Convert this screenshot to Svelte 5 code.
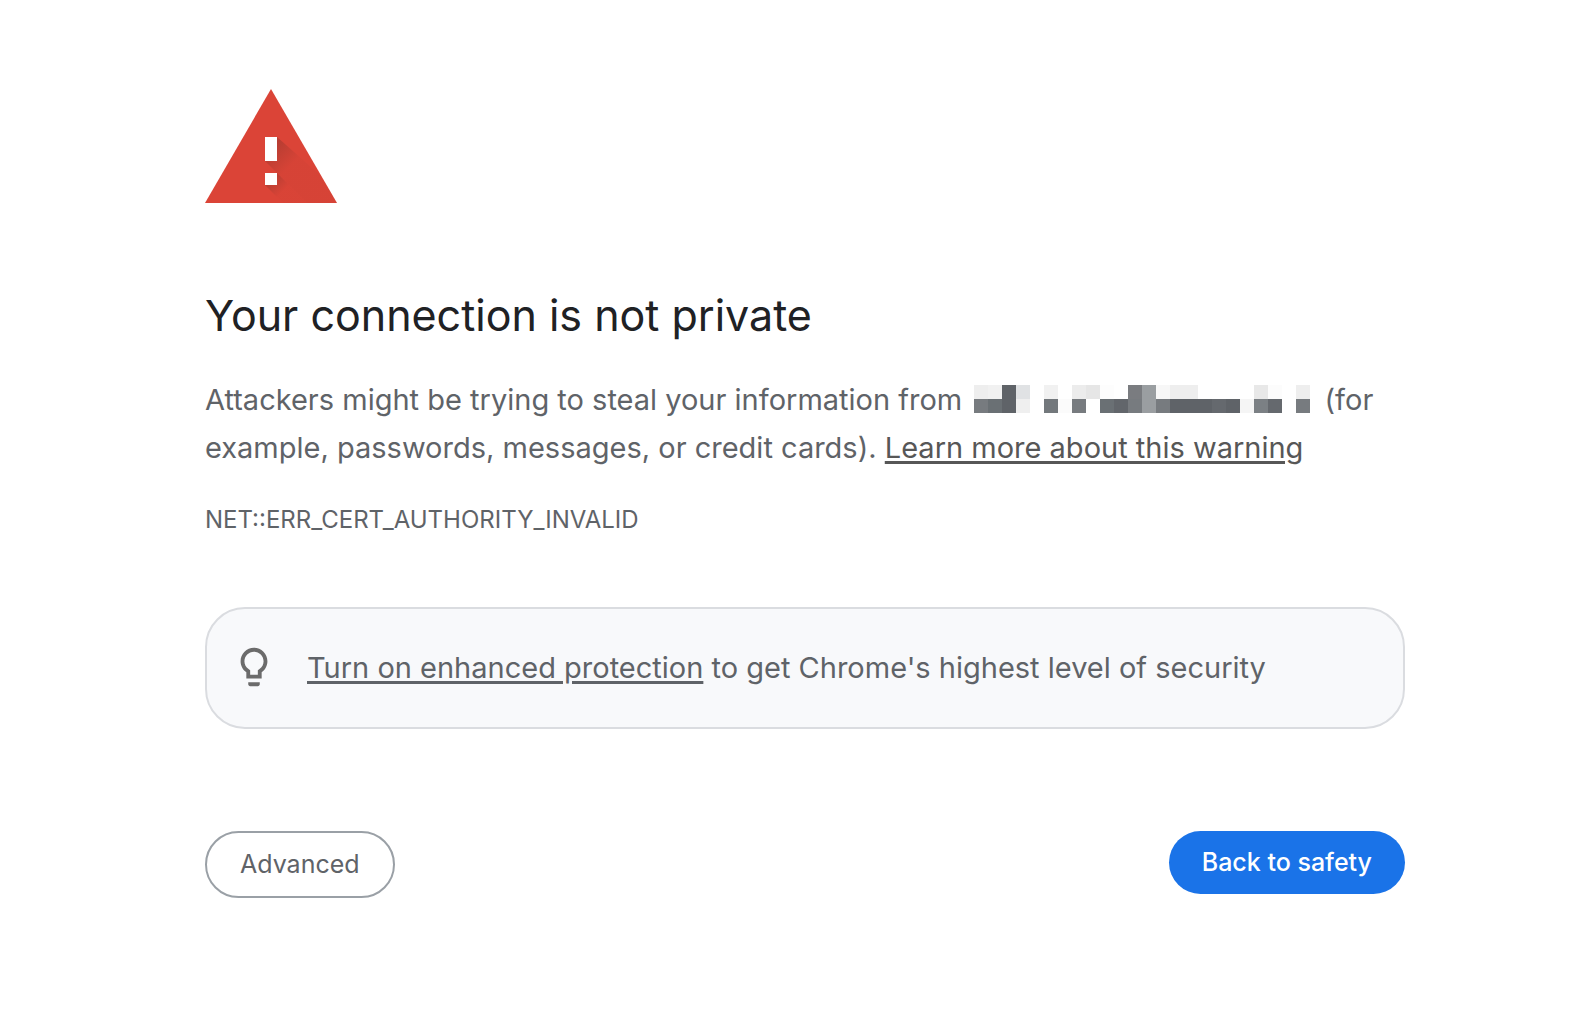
<script lang="ts">
	let { onAdvanced = () => {}, onBack = () => {} } = $props();

	// Masked host name, one colour per block, null where the block is empty
	const cell = 14;
	const mask: (string | null)[][] = [
		['#eeeeee', '#f1f1f1', '#5f6368', '#e0e2e4', null, '#f1f1f1', null, '#ececec', '#e6e6e6', '#fdfdfd', null, '#7a7c80', '#9a9ea1', '#f7f7f7', '#eeeeee', '#eeeeee', null, null, null, null, '#e8e8e8', '#fcfcfc', null, '#eeeeee'],
		['#777b7f', '#6a7074', '#5f6368', '#efefef', null, '#73787c', '#fbfbfb', '#777b7f', null, '#6a7074', '#62666b', '#777b7f', '#9a9ea1', '#777b7f', '#5f6368', '#5f6368', '#5f6368', '#65696e', '#5f6368', '#f5f5f5', '#7b8084', '#65696e', null, '#777b7f']
	];
</script>

<main>
	<svg class="warning" viewBox="0 0 132 114" role="img" aria-label="Warning">
		<defs>
			<linearGradient id="bar-shade" gradientUnits="userSpaceOnUse" x1="66" y1="60" x2="84" y2="78">
				<stop offset="0" stop-color="#8c352c" stop-opacity="0.45" />
				<stop offset="1" stop-color="#8c352c" stop-opacity="0.06" />
			</linearGradient>
			<linearGradient id="dot-shade" gradientUnits="userSpaceOnUse" x1="66" y1="90" x2="78" y2="102">
				<stop offset="0" stop-color="#8c352c" stop-opacity="0.45" />
				<stop offset="1" stop-color="#8c352c" stop-opacity="0.03" />
			</linearGradient>
		</defs>
		<path fill="#db4437" d="M66 0 132 114H0z" />
		<path fill="url(#bar-shade)" d="M72 48 115 86 132 114H102L60 72z" />
		<path fill="url(#dot-shade)" d="M72 84 102 114H78L60 96z" />
		<path fill="#fff" d="M60 48h12v24H60zM60 84h12v12H60z" />
	</svg>

	<h1>Your connection is not private</h1>

	<p class="message">
		Attackers might be trying to steal your information from
		<svg class="host" viewBox="0 0 336 28" role="img" aria-label="Hidden site" shape-rendering="crispEdges">
			{#each mask as row, y}
				{#each row as fill, x}
					{#if fill}
						<rect x={x * cell} y={y * cell} width={cell} height={cell} {fill} />
					{/if}
				{/each}
			{/each}
		</svg>
		(for example, passwords, messages, or credit cards).
		<a href="#learn-more">Learn more about this warning</a>
	</p>

	<div class="code">NET::ERR_CERT_AUTHORITY_INVALID</div>

	<div class="tip">
		<svg class="bulb" viewBox="0 0 24 24" aria-hidden="true">
			<path fill="#6b6b6b" d="M9 21c0 .55.45 1 1 1h4c.55 0 1-.45 1-1v-1H9v1zm3-19C8.14 2 5 5.14 5 9c0 2.38 1.19 4.47 3 5.74V18h8v-3.26c1.81-1.27 3-3.36 3-5.74 0-3.86-3.14-7-7-7zm2.85 11.1l-.85.6V16h-4v-2.3l-.85-.6C7.8 12.16 7 10.63 7 9c0-2.76 2.24-5 5-5s5 2.24 5 5c0 1.63-.8 3.16-2.15 4.1z" />
		</svg>
		<p><a href="#enhanced-protection">Turn on enhanced protection</a> to get Chrome's highest level of security</p>
	</div>

	<div class="actions">
		<button type="button" class="btn secondary" onclick={onAdvanced}>Advanced</button>
		<button type="button" class="btn primary" onclick={onBack}>Back to safety</button>
	</div>
</main>

<style>
	:global(body) {
		margin: 0;
		background: #fff;
	}
	main {
		padding: 89px 167px 64px 205px;
		font-family: Inter, Roboto, sans-serif;
		color: #5f6368;
	}
	.warning {
		display: block;
		width: 132px;
		height: 114px;
	}
	h1 {
		margin: 84px 0 33px;
		font-size: 43px;
		line-height: 56px;
		font-weight: 400;
		color: #202124;
	}
	p {
		margin: 0;
		font-size: 29px;
		line-height: 48px;
	}
	.host {
		width: 336px;
		height: 28px;
		margin: 0 6px 0 4px;
		vertical-align: -3px;
	}
	a {
		color: inherit;
		text-decoration: underline;
		text-decoration-thickness: 3px;
		text-underline-offset: 3px;
	}
	.message a {
		color: #575757;
	}
	.code {
		margin-top: 30px;
		font-size: 24px;
		line-height: 36px;
	}
	.tip {
		display: flex;
		align-items: flex-start;
		gap: 30px;
		margin-top: 69px;
		padding: 35px 24px;
		background: #f8f9fb;
		border: 2px solid #dadce0;
		border-radius: 40px;
	}
	.bulb {
		flex: none;
		width: 46px;
		height: 46px;
	}
	.actions {
		display: flex;
		justify-content: space-between;
		align-items: flex-start;
		margin-top: 102px;
	}
	.btn {
		padding: 15px 33px;
		border: none;
		border-radius: 34px;
		font-family: inherit;
		font-size: 25px;
		line-height: 33px;
		cursor: pointer;
	}
	.btn.secondary {
		background: #fff;
		border: 2px solid #9aa0a6;
		color: #5f6368;
	}
	.btn.primary {
		background: #1a73e8;
		color: #fff;
		font-weight: 500;
	}
</style>
